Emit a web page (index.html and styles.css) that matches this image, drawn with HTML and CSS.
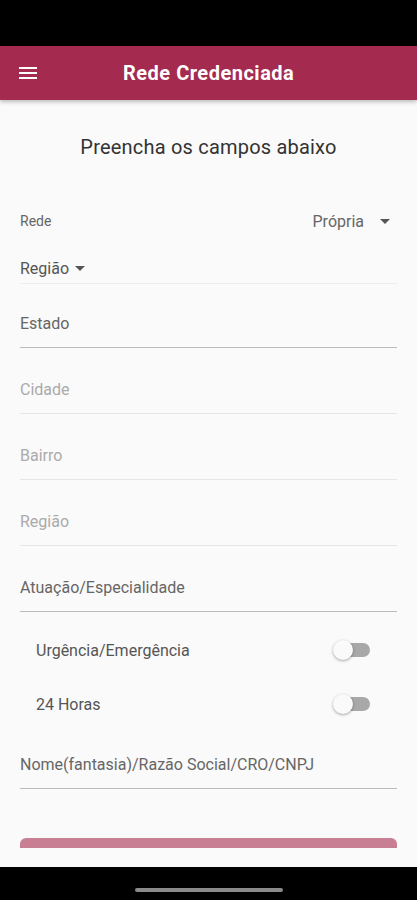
FILE: index.html
```html
<!DOCTYPE html>
<html lang="pt-BR">
<head>
    <meta charset="UTF-8">
    <title>Rede Credenciada</title>
    <link rel="stylesheet" href="styles.css">
</head>
<body>
    <div class="status-bar"></div>
    <header class="app-bar">
        <svg class="menu-icon" width="24" height="24" viewBox="0 0 24 24">
            <path d="M3 18h18v-2H3v2zm0-5h18v-2H3v2zm0-7v2h18V6H3z" fill="#fff"/>
        </svg>
        <h1>Rede Credenciada</h1>
    </header>

    <main class="content">
        <h2 class="title">Preencha os campos abaixo</h2>

        <div class="rede-row">
            <span class="rede-label">Rede</span>
            <span class="select">Própria <span class="caret"></span></span>
        </div>

        <div class="regiao-select">
            <span>Região</span> <span class="caret"></span>
        </div>

        <div class="field strong">Estado</div>
        <div class="field light">Cidade</div>
        <div class="field light">Bairro</div>
        <div class="field light">Região</div>
        <div class="field strong">Atuação/Especialidade</div>

        <div class="switches">
            <div class="switch-row">
                <span>Urgência/Emergência</span>
                <span class="switch"><span class="thumb"></span></span>
            </div>
            <div class="switch-row">
                <span>24 Horas</span>
                <span class="switch"><span class="thumb"></span></span>
            </div>
        </div>

        <div class="field strong name">Nome(fantasia)/Razão Social/CRO/CNPJ</div>

        <button class="search-btn"></button>
    </main>

    <div class="bottom-space"></div>
    <div class="nav-bar"><span class="home-indicator"></span></div>
</body>
</html>
```

FILE: styles.css
```css
body {
    margin: 0;
    width: 417px;
    height: 900px;
    display: flex;
    flex-direction: column;
    font-family: Roboto, "Noto Sans", sans-serif;
    background: #fafafa;
    overflow: hidden;
}

.status-bar {
    height: 46px;
    background: #000;
    flex-shrink: 0;
}

.app-bar {
    height: 54px;
    flex-shrink: 0;
    background: #a42a50;
    display: flex;
    align-items: center;
    padding: 0 16px;
    box-shadow: 0 2px 4px rgba(0, 0, 0, 0.25);
    position: relative;
    z-index: 1;
}

.menu-icon {
    flex-shrink: 0;
}

.app-bar h1 {
    margin: 0 0 0 83px;
    color: #fff;
    font-size: 20px;
    font-weight: 700;
    letter-spacing: 0.5px;
}

.content {
    flex: 1;
    overflow: hidden;
    padding: 0 20px;
    background: #fafafa;
}

.title {
    margin: 34px 0 0;
    text-align: center;
    font-size: 20px;
    font-weight: 400;
    letter-spacing: 0.2px;
    color: #333;
    height: 26px;
    line-height: 26px;
}

.rede-row {
    margin-top: 51px;
    height: 20px;
    display: flex;
    align-items: center;
    justify-content: space-between;
    color: #666;
}

.rede-label {
    font-size: 14px;
}

.select {
    font-size: 16px;
    display: flex;
    align-items: center;
    padding-right: 7px;
}

.select .caret {
    margin-left: 16px;
}

.caret {
    display: inline-block;
    width: 0;
    height: 0;
    border-left: 5px solid transparent;
    border-right: 5px solid transparent;
    border-top: 5px solid #555;
}

.regiao-select {
    margin-top: 22px;
    height: 31px;
    display: flex;
    align-items: center;
    gap: 6px;
    font-size: 16px;
    color: #555;
    border-bottom: 1px solid #eee;
    box-sizing: border-box;
}

.field {
    height: 64px;
    box-sizing: border-box;
    padding-bottom: 14px;
    display: flex;
    align-items: flex-end;
    font-size: 16px;
    line-height: 18px;
}

.field + .field {
    height: 66px;
}

.field.strong {
    color: #666;
    border-bottom: 1.5px solid #bcbcbc;
}

.field.light {
    color: #aaa;
    border-bottom: 1px solid #e6e6e6;
}

.switches {
    margin-top: 11px;
}

.switch-row {
    height: 54px;
    display: flex;
    align-items: center;
    justify-content: space-between;
    padding: 0 27px 0 16px;
    font-size: 16px;
    color: #555;
}

.switch {
    width: 34px;
    height: 14px;
    border-radius: 7px;
    background: #a8a8a8;
    position: relative;
}

.thumb {
    position: absolute;
    left: -3px;
    top: -3px;
    width: 20px;
    height: 20px;
    border-radius: 50%;
    background: #fafafa;
    box-shadow: 0 1px 3px rgba(0, 0, 0, 0.35);
}

.field.name {
    height: 66px;
    padding-bottom: 14px;
    margin-top: -8px;
}

.search-btn {
    display: block;
    width: 100%;
    height: 48px;
    margin-top: 49px;
    border: none;
    border-radius: 6px;
    background: #c97f93;
}

.bottom-space {
    height: 19px;
    flex-shrink: 0;
    background: #fafafa;
}

.nav-bar {
    height: 33px;
    flex-shrink: 0;
    background: #000;
    display: flex;
    justify-content: center;
}

.home-indicator {
    margin-top: 21px;
    width: 148px;
    height: 4px;
    border-radius: 2px;
    background: #8a8a8a;
}
```
